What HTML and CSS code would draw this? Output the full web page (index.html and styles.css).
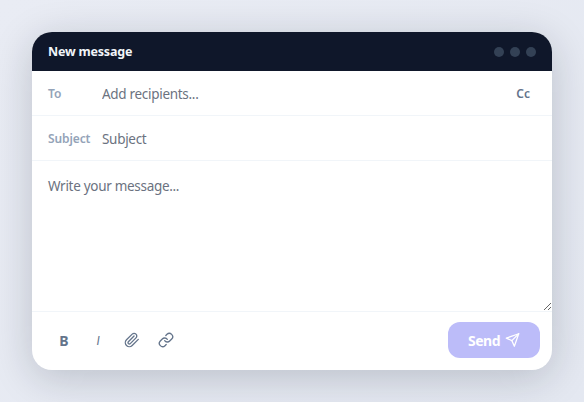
FILE: index.html
```html
<!DOCTYPE html>
<html lang="en">
<head>
    <meta charset="UTF-8">
    <meta name="viewport" content="width=device-width, initial-scale=1.0">
    <title>New message</title>
    <link rel="stylesheet" href="styles.css">
</head>
<body>
    <div class="composer">
        <div class="composer-header">
            <span class="composer-title">New message</span>
            <div class="window-dots">
                <span class="dot"></span>
                <span class="dot"></span>
                <span class="dot"></span>
            </div>
        </div>

        <div class="field-row">
            <label class="field-label" for="to">To</label>
            <input class="field-input" id="to" type="text" placeholder="Add recipients...">
            <button class="cc-button">Cc</button>
        </div>

        <div class="field-row">
            <label class="field-label" for="subject">Subject</label>
            <input class="field-input" id="subject" type="text" placeholder="Subject">
        </div>

        <textarea class="message-body" placeholder="Write your message..."></textarea>

        <div class="composer-footer">
            <div class="format-tools">
                <button class="tool-button tool-bold">B</button>
                <button class="tool-button tool-italic">I</button>
                <button class="tool-button">
                    <svg width="16" height="16" viewBox="0 0 24 24" fill="none" stroke="currentColor" stroke-width="2" stroke-linecap="round" stroke-linejoin="round"><path d="m21.44 11.05-9.19 9.19a6 6 0 0 1-8.49-8.49l8.57-8.57A4 4 0 1 1 18 8.84l-8.59 8.57a2 2 0 0 1-2.83-2.83l8.49-8.48"/></svg>
                </button>
                <button class="tool-button">
                    <svg width="16" height="16" viewBox="0 0 24 24" fill="none" stroke="currentColor" stroke-width="2" stroke-linecap="round" stroke-linejoin="round"><path d="M10 13a5 5 0 0 0 7.54.54l3-3a5 5 0 0 0-7.07-7.07l-1.72 1.71"/><path d="M14 11a5 5 0 0 0-7.54-.54l-3 3a5 5 0 0 0 7.07 7.07l1.71-1.71"/></svg>
                </button>
            </div>
            <button class="send-button">
                Send
                <svg width="16" height="16" viewBox="0 0 24 24" fill="none" stroke="currentColor" stroke-width="2" stroke-linecap="round" stroke-linejoin="round"><path d="M22 2 11 13"/><path d="M22 2 15 22l-4-9-9-4 20-7z"/></svg>
            </button>
        </div>
    </div>
</body>
</html>
```

FILE: styles.css
```css
* { box-sizing: border-box; }

body {
    margin: 0;
    height: 402px;
    padding: 32px;
    overflow: hidden;
    background: linear-gradient(135deg, #e9ecf4, #e4e8f1);
    font-family: "Noto Sans", sans-serif;
}

.composer {
    display: flex;
    flex-direction: column;
    width: 520px;
    height: 338px;
    background: #fff;
    border-radius: 20px;
    overflow: hidden;
    box-shadow: 0 8px 40px rgba(15, 23, 42, 0.2);
}

.composer-header {
    display: flex;
    align-items: center;
    justify-content: space-between;
    height: 39px;
    padding: 0 16px;
    background: #0f172a;
}

.composer-title {
    color: #f1f5f9;
    font-size: 12.5px;
    font-weight: 700;
    letter-spacing: -0.2px;
}

.window-dots {
    display: flex;
    gap: 6px;
}

.dot {
    width: 10px;
    height: 10px;
    border-radius: 50%;
    background: #334155;
}

.field-row {
    display: flex;
    align-items: center;
    height: 45px;
    padding: 0 16px;
    border-bottom: 1px solid #f1f5f9;
}

.field-label {
    width: 54px;
    flex-shrink: 0;
    color: #94a3b8;
    font-size: 12px;
    font-weight: 600;
    letter-spacing: -0.1px;
}

.field-input {
    flex: 1;
    min-width: 0;
    padding: 2px 0 0;
    border: none;
    outline: none;
    color: #334155;
    font-family: "Noto Sans", sans-serif;
    font-size: 13.5px;
    letter-spacing: -0.3px;
}

.field-input::placeholder,
.message-body::placeholder {
    color: #6b7280;
}

.cc-button {
    padding: 0 6px;
    border: none;
    background: none;
    color: #64748b;
    font-family: "Noto Sans", sans-serif;
    font-size: 12px;
    font-weight: 600;
}

.message-body {
    display: block;
    width: 100%;
    height: 151px;
    padding: 15px 16px;
    border: none;
    border-bottom: 1px solid #f1f5f9;
    outline: none;
    color: #334155;
    font-family: "Noto Sans", sans-serif;
    font-size: 13.5px;
    letter-spacing: -0.3px;
    line-height: 1.5;
}

.composer-footer {
    display: flex;
    flex: 1;
    align-items: center;
    justify-content: space-between;
    padding: 0 12px 2px 16px;
}

.format-tools {
    display: flex;
    gap: 2px;
}

.tool-button {
    display: flex;
    align-items: center;
    justify-content: center;
    width: 32px;
    height: 32px;
    padding: 0;
    border: none;
    background: none;
    color: #64748b;
    font-family: Inter, sans-serif;
    font-size: 13px;
}

.tool-bold {
    font-family: "Noto Sans", sans-serif;
    font-size: 14px;
    font-weight: 700;
}

.tool-italic { font-style: italic; font-size: 12px; }

.send-button {
    display: flex;
    align-items: center;
    gap: 5px;
    height: 36px;
    width: 92px;
    padding: 0 20px;
    border: none;
    border-radius: 12px;
    background: #bcbcf9;
    color: #fff;
    font-family: "Noto Sans", sans-serif;
    font-size: 14px;
    font-weight: 700;
    letter-spacing: -0.5px;
}
```
